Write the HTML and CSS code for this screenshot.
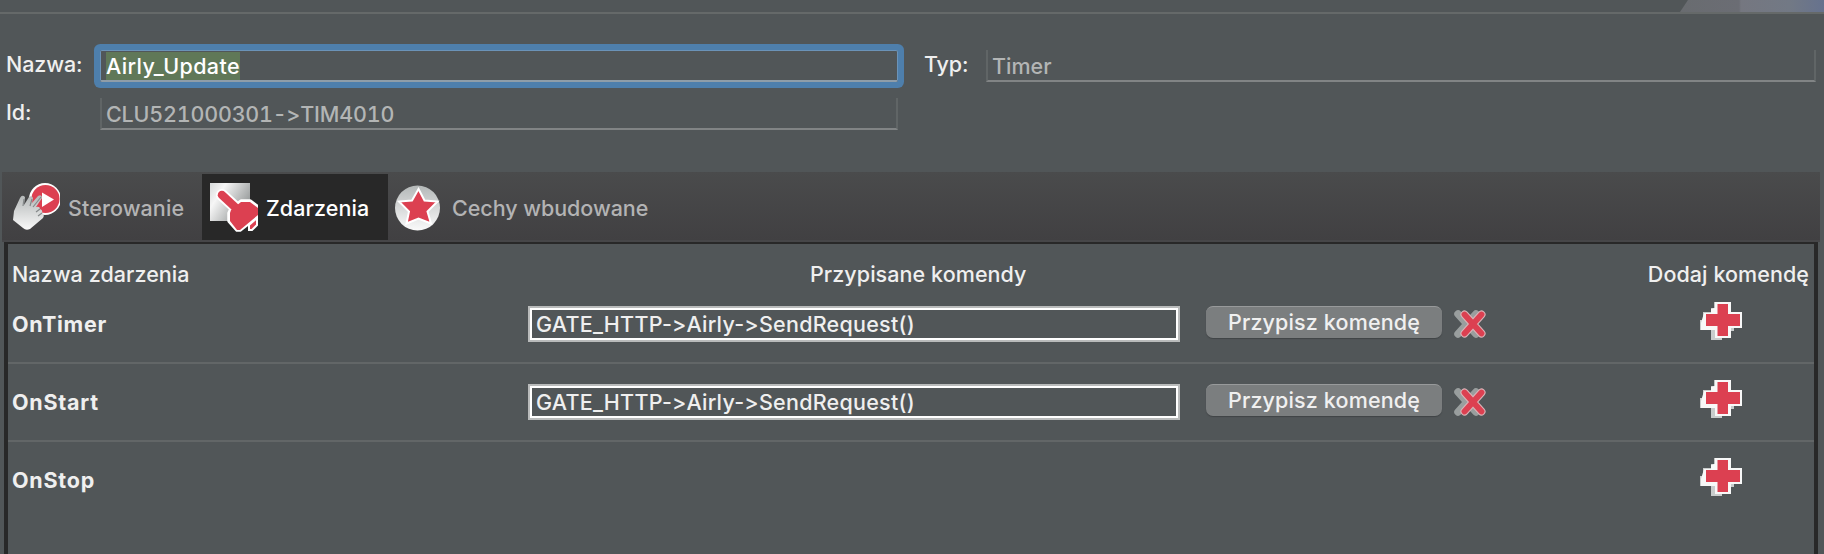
FILE: index.html
```
<!DOCTYPE html>
<html lang="pl">
<head>
<meta charset="utf-8">
<title>Airly_Update</title>
<link rel="stylesheet" href="styles.css">
</head>
<body>
<svg class="defs" width="0" height="0" aria-hidden="true">
  <defs>
    <linearGradient id="silver" x1="0" y1="0" x2="1" y2="0.6">
      <stop offset="0" stop-color="#d8dada"/><stop offset="0.3" stop-color="#f6f6f6"/><stop offset="1" stop-color="#8f9393"/>
    </linearGradient>
    <linearGradient id="hand" x1="0" y1="0" x2="0" y2="1">
      <stop offset="0" stop-color="#b4b8b8"/><stop offset="1" stop-color="#fafafa"/>
    </linearGradient>
    <symbol id="plus" viewBox="0 0 42 38">
      <path d="M3 10h8V6h3.500V0H31v10h11v16h-8v3h-3v7h-9v2H11V28H0V18h3z" fill="#c9cccc"/>
      <path d="M14.500 0H31v10h11v16H31v10H15v-8H1v-7l3-10h7V7l3.500-1z" fill="#f8f8f8"/>
      <path d="M17.500 2H28v10h12v12H28v10H17.500V24H6V12h11.500z" fill="#dc4051"/>
    </symbol>
    <symbol id="remove" viewBox="0 0 32 28">
      <path d="M4 4l18 20M22 4L4 24" stroke="#999e9e" stroke-width="7.500" stroke-linecap="round"/>
      <path d="M10.500 4.500l17 19M27.500 4.500l-17 19" stroke="#d9b4b8" stroke-width="8" stroke-linecap="round"/>
      <path d="M10.500 4.500l17 19M27.500 4.500l-17 19" stroke="#dc4051" stroke-width="5.800" stroke-linecap="round"/>
    </symbol>
  </defs>
</svg>
<div class="window">
  <div class="titlebar"><div class="wallpaper"></div></div>
  <form class="form">
    <div class="field">
      <label class="label">Nazwa:</label>
      <div class="input focused"><span class="selected">Airly_Update</span></div>
    </div>
    <div class="field field-type">
      <label class="label">Typ:</label>
      <div class="input readonly"><span>Timer</span></div>
    </div>
    <div class="field">
      <label class="label">Id:</label>
      <div class="input readonly"><span class="id">CLU521000301-&gt;TIM4010</span></div>
    </div>
  </form>
  <div class="tabs">
    <div class="tab tab-control">
      <svg width="48" height="50" viewBox="0 0 48 50">
        <circle cx="33" cy="17" r="16" fill="#fff"/>
        <circle cx="33.500" cy="17" r="14" fill="#dc4051"/>
        <path d="M30 10.500l12 7-12 7.500z" fill="#fff"/>
        <path d="M1 38l1-9 6-13q2-4 5-1l-1 8 5-8q3-2 4 1l-1 5 6-7q4-2 4 2l-6 9q4-1 4 2 3 1 2 4 3 2 1 5L18 47q-4 2-7-1z" fill="url(#hand)"/>
        <path d="M12 17l-1 7M20 17l-2 7M29 15l-8 10M28 27l-4 3M30 31l-4 3" stroke="#85898a" stroke-width="1.200" fill="none"/>
      </svg>
      <span class="tab-text">Sterowanie</span>
    </div>
    <div class="tab tab-events active">
      <svg width="48" height="50" viewBox="0 0 48 50">
        <path d="M0 1h40v38H0z" fill="url(#silver)"/>
        <g stroke-linecap="round" stroke-linejoin="round">
          <path d="M12 13l13 12" stroke="#fff" stroke-width="12"/>
          <path d="M21 27l10-8h9l8 6v9L30 48h-3l-8-9v-8z" fill="#dc4051" stroke="#fff" stroke-width="3.500"/>
          <path d="M12 13l14 13" stroke="#dc4051" stroke-width="8.500"/>
          <path d="M21 28l10-8h9l8 6v7L30 48h-3l-7-9v-8z" fill="#dc4051"/>
        </g>
        <path d="M39 43l8-7v7l-5 5h-3z" fill="#dc4051" stroke="#fff" stroke-width="2"/>
      </svg>
      <span class="tab-text">Zdarzenia</span>
    </div>
    <div class="tab tab-features">
      <svg width="46" height="46" viewBox="0 0 46 46">
        <circle cx="22.500" cy="23" r="22.500" fill="url(#hand)"/>
        <path d="M23.500 4l6 11.500 13 1-10 10 3.500 12-12.500-5-12 5 2.500-12-10-10 13-1z" fill="#dc4051" stroke="#fff" stroke-width="2"/>
      </svg>
      <span class="tab-text">Cechy wbudowane</span>
    </div>
  </div>
  <div class="panel">
    <div class="row header">
      <span class="h-name">Nazwa zdarzenia</span><span class="h-commands">Przypisane komendy</span><span class="h-add">Dodaj komendę</span>
    </div>
    <div class="row event">
      <b class="name">OnTimer</b>
      <div class="command"><span>GATE_HTTP-&gt;Airly-&gt;SendRequest()</span></div>
      <button class="assign">Przypisz komendę</button>
      <svg class="remove" width="32" height="28"><use href="#remove"/></svg>
      <svg class="add" width="42" height="38"><use href="#plus"/></svg>
    </div>
    <div class="row event">
      <b class="name">OnStart</b>
      <div class="command"><span>GATE_HTTP-&gt;Airly-&gt;SendRequest()</span></div>
      <button class="assign">Przypisz komendę</button>
      <svg class="remove" width="32" height="28"><use href="#remove"/></svg>
      <svg class="add" width="42" height="38"><use href="#plus"/></svg>
    </div>
    <div class="row event">
      <b class="name">OnStop</b>
      <svg class="add" width="42" height="38"><use href="#plus"/></svg>
    </div>
  </div>
</div>
</body>
</html>
```
FILE: styles.css
```
* { box-sizing: border-box; }
body {
  margin: 0;
  background: #515658;
  color: #efefef;
  font: 450 21.5px/26px Inter, "Liberation Sans", sans-serif;
  font-feature-settings: "calt" 0;
  overflow: hidden;
}
span, label, b, button { white-space: nowrap; }
.defs { display: block; }
.window { height: 554px; display: flex; flex-direction: column; }
.titlebar { height: 14px; flex: none; border-bottom: 2px solid #656969; display: flex; justify-content: flex-end; }
.wallpaper {
  width: 144px;
  height: 12px;
  background: linear-gradient(90deg, #696c70 0, #6b6d74 59px, #757780 61px, #727985 110px, #66728e 144px);
  clip-path: polygon(8px 0, 100% 0, 100% 100%, 0 100%);
}
.form { height: 158px; flex: none; display: grid; grid-template-columns: 898px 918px; grid-template-rows: 32px 32px; row-gap: 16px; padding-top: 36px; }
.field { display: flex; }
.label { width: 100px; padding: 1px 0 0 6px; letter-spacing: -0.1px; }
.field-type .label { width: 88px; padding-left: 26px; }
.input { flex: 1; border: 2px solid #606566; border-top: 0; border-bottom-color: #818485; padding: 3px 0 0 4px; }
.readonly { color: #b3b5b5; }
.id { font-feature-settings: "calt" 0, "tnum" 1; letter-spacing: -0.2px; }
.focused {
  color: #fff;
  border: 1px solid #6b93b8;
  border-bottom: 2px solid #8f9da8;
  border-radius: 2px;
  box-shadow: 0 0 0 6px #4e7fac;
  padding: 1px 0 0 5px;
}
.selected { display: inline-block; height: 28px; line-height: 28px; letter-spacing: 0.4px; background: #607858; }
.tabs {
  height: 70px;
  flex: none;
  margin: 0 4px 0 2px;
  padding: 2px 0 0 2px;
  display: flex;
  background: linear-gradient(#4a4b4c, #414042);
  border-bottom: 2px solid #464648;
}
.tab { display: flex; align-items: center; height: 66px; color: #b3b3b4; letter-spacing: 0.1px; }
.tab-text { padding-top: 2px; }
.tab-control { width: 198px; padding-left: 8px; gap: 8px; }
.tab-events { width: 186px; padding-left: 8px; gap: 8px; background: #282828; color: #fff; }
.tab-features { padding-left: 7px; gap: 11px; padding-top: 2px; letter-spacing: -0.05px; }
.tab-features .tab-text { padding-top: 0; }
.panel { flex: 1; margin: 0 6px 0 4px; border: 4px solid #282828; border-top-width: 2px; border-bottom: 0; }
.row { display: flex; }
.header { height: 42px; padding: 17px 5px 0 4px; letter-spacing: 0.07px; }
.h-name { width: 798px; }
.h-commands { flex: 1; }
.event { height: 78px; padding: 20px 72px 0 4px; border-bottom: 2px solid #626667; }
.event:last-child { border-bottom: 0; }
.name { width: 516px; padding-top: 5px; letter-spacing: 0.75px; }
.command { width: 652px; height: 36px; border: 2px solid #b9bbbb; outline: 2px solid #fff; outline-offset: -4px; padding: 3px 0 0 6px; letter-spacing: 0.25px; }
.assign {
  width: 236px; height: 32px; margin-left: 26px; padding: 0 0 2px;
  border: 0; border-top: 1px solid #989a9b; border-radius: 7px;
  background: #7b7e7f; box-shadow: 0 1px 1px #404446;
  color: #f0f0f0; font: inherit; font-feature-settings: inherit; letter-spacing: 0.15px;
}
.remove { margin: 4px 0 0 12px; }
.add { margin: -4px 0 0 auto; }
```
